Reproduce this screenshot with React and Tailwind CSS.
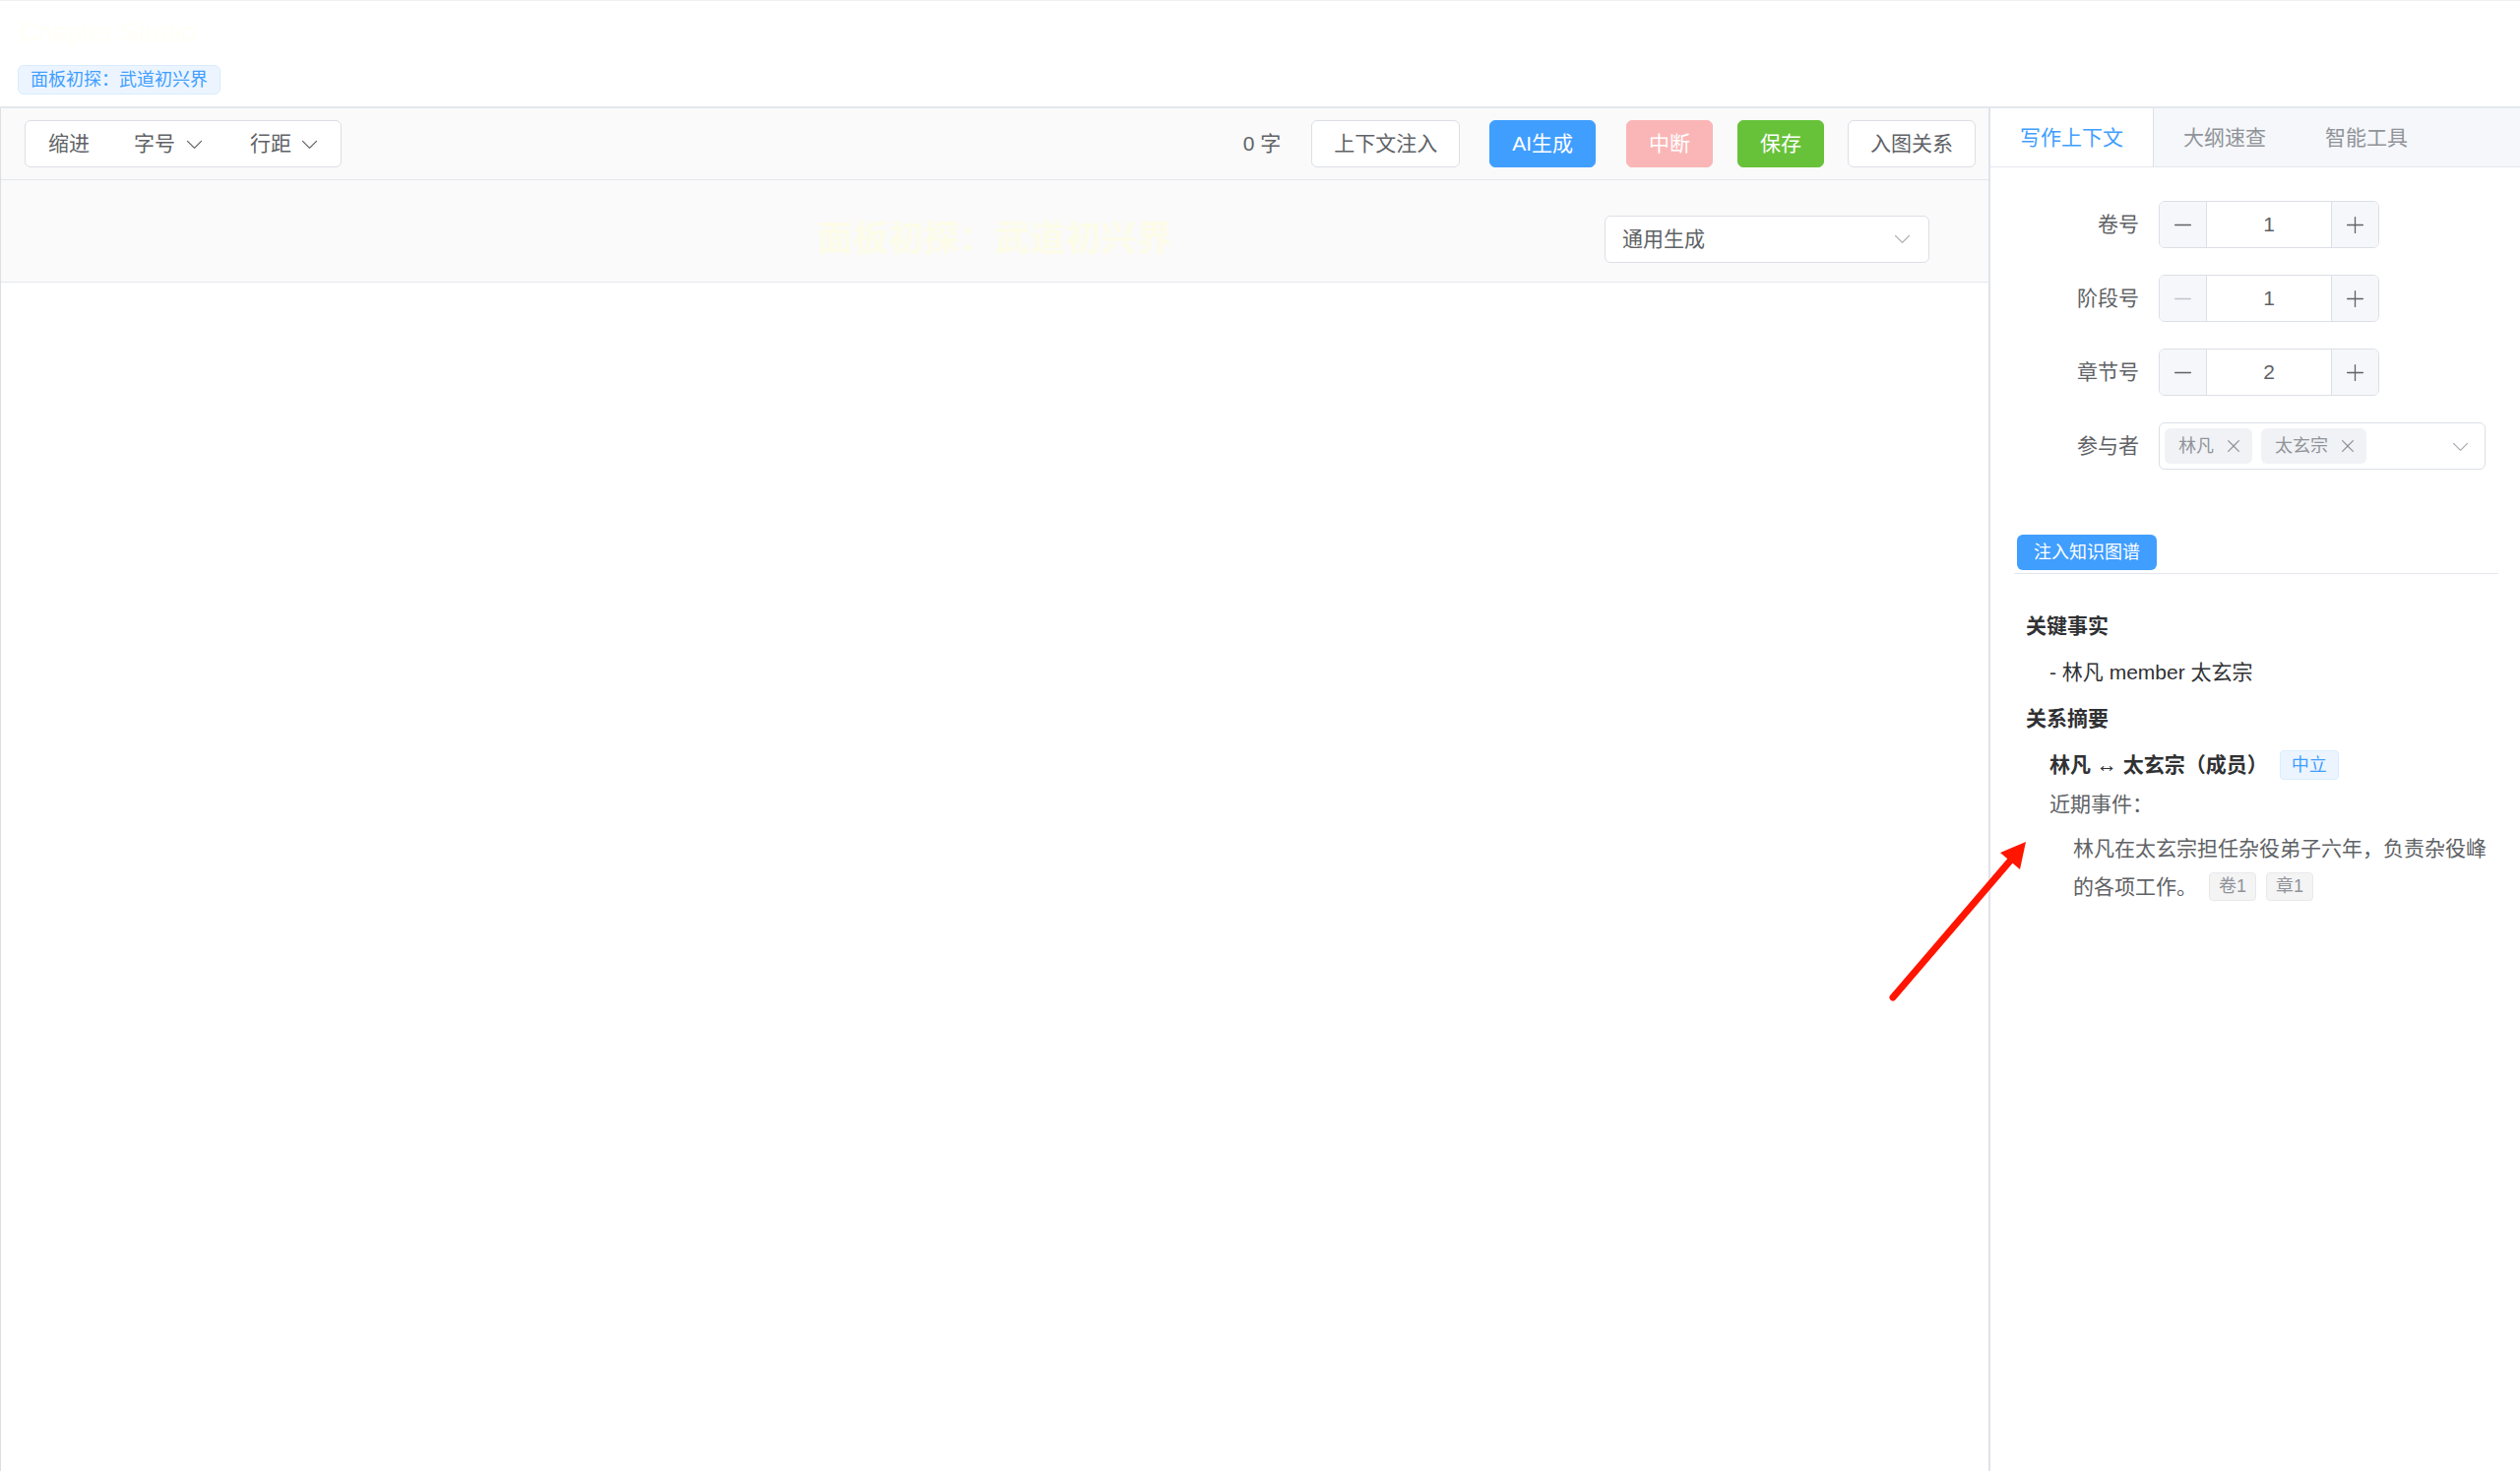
import React from "react";

const FONT = "font-['Liberation_Sans','Noto_Sans_CJK_SC',sans-serif]";

const ArrowDown = ({ className }) => (
  <svg viewBox="0 0 1024 1024" className={className} fill="currentColor">
    <path d="M831.872 340.864 512 652.672 192.128 340.864a30.592 30.592 0 0 0-42.752 0 29.12 29.12 0 0 0 0 41.6L489.664 714.24a32 32 0 0 0 44.672 0l340.288-331.712a29.12 29.12 0 0 0 0-41.728 30.592 30.592 0 0 0-42.752 0z" />
  </svg>
);

const Minus = ({ className }) => (
  <svg viewBox="0 0 1024 1024" className={className} fill="currentColor">
    <path d="M128 544h768a32 32 0 1 0 0-64H128a32 32 0 0 0 0 64z" />
  </svg>
);

const Plus = ({ className }) => (
  <svg viewBox="0 0 1024 1024" className={className} fill="currentColor">
    <path d="M480 480V128a32 32 0 0 1 64 0v352h352a32 32 0 1 1 0 64H544v352a32 32 0 1 1-64 0V544H128a32 32 0 0 1 0-64h352z" />
  </svg>
);

const Close = ({ className }) => (
  <svg viewBox="0 0 1024 1024" className={className} fill="currentColor">
    <path d="M764.288 214.592 512 466.88 259.712 214.592a31.936 31.936 0 0 0-45.12 45.12L466.752 512 214.528 764.224a31.936 31.936 0 1 0 45.12 45.184L512 557.184l252.288 252.288a31.936 31.936 0 0 0 45.12-45.12L557.12 512.064l252.288-252.352a31.936 31.936 0 1 0-45.12-45.184z" />
  </svg>
);

const NumberInput = ({ value, minDisabled }) => (
  <div className="flex h-[48px] w-[224px] overflow-hidden rounded-[6px] border border-[#dcdfe6] bg-white">
    <div
      className={`flex w-[48px] items-center justify-center border-r border-[#dcdfe6] bg-[#f5f7fa] ${
        minDisabled ? "text-[#c0c4cc]" : "text-[#606266]"
      }`}
    >
      <Minus className="h-[21px] w-[21px]" />
    </div>
    <div className="flex flex-1 items-center justify-center text-[21px] text-[#606266]">
      {value}
    </div>
    <div className="flex w-[48px] items-center justify-center border-l border-[#dcdfe6] bg-[#f5f7fa] text-[#606266]">
      <Plus className="h-[21px] w-[21px]" />
    </div>
  </div>
);

const PersonTag = ({ name }) => (
  <span className="flex h-[36px] items-center rounded-[6px] bg-[#f0f2f5] pl-[14px] pr-[9px] text-[18px] text-[#909399]">
    {name}
    <Close className="ml-[10px] h-[20px] w-[20px]" />
  </span>
);

const fields = [
  { label: "卷号", value: 1 },
  { label: "阶段号", value: 1, minDisabled: true },
  { label: "章节号", value: 2 },
];

export default function App() {
  return (
    <div className={`relative h-[1494px] w-full overflow-hidden bg-white ${FONT}`}>
      {/* page header */}
      <div className="h-[108px] border-t border-[#eef0f4] pl-[18px]">
        <div className="mt-[16px] pl-[1px] text-[27px] leading-[32px] text-[#fffff7]">
          Chapter Studio
        </div>
        <span className="mt-[17px] flex h-[30px] w-fit items-center rounded-[6px] border border-[#d9ecff] bg-[#ecf5ff] px-[12px] text-[18px] text-[#409eff]">
          面板初探：武道初兴界
        </span>
      </div>

      <div className="flex h-[1386px] border-t-2 border-[#e4e7ed]">
        {/* editor */}
        <div className="flex w-[2020px] flex-col border-l border-[#dcdfe6]">
          <div className="flex h-[73px] items-center justify-between border-b border-[#e4e7ed] bg-[#fafafa] pl-[24px] pr-[13px]">
            <div className="flex h-[48px] rounded-[6px] border border-[#dcdfe6] bg-white text-[21px] text-[#606266]">
              <div className="flex items-center pl-[23px] pr-[21px]">缩进</div>
              <div className="flex items-center pl-[24px] pr-[22px]">
                字号
                <ArrowDown className="ml-[9px] h-[21px] w-[21px]" />
              </div>
              <div className="flex items-center pl-[24px] pr-[21px]">
                行距
                <ArrowDown className="ml-[8px] h-[21px] w-[21px]" />
              </div>
            </div>
            <div className="flex items-center text-[21px]">
              <span className="text-[#606266]">0 字</span>
              <button className="ml-[31px] h-[48px] rounded-[6px] border border-[#dcdfe6] bg-white px-[22px] text-[#606266]">
                上下文注入
              </button>
              <button className="ml-[30px] h-[48px] rounded-[6px] border border-[#409eff] bg-[#409eff] px-[22px] text-white">
                AI生成
              </button>
              <button className="ml-[31px] h-[48px] rounded-[6px] border border-[#fab6b6] bg-[#fab6b6] px-[22px] text-white">
                中断
              </button>
              <button className="ml-[25px] h-[48px] rounded-[6px] border border-[#67c23a] bg-[#67c23a] px-[22px] text-white">
                保存
              </button>
              <button className="ml-[24px] h-[48px] rounded-[6px] border border-[#dcdfe6] bg-white px-[22px] text-[#606266]">
                入图关系
              </button>
            </div>
          </div>

          <div className="grid h-[104px] grid-cols-[1fr_auto_1fr] items-center border-b border-[#e4e7ed] bg-[#fafafa] px-[60px] pt-[16px]">
            <div />
            <div className="text-[36px] font-bold leading-[44px] text-[#fdfce9]">
              面板初探：武道初兴界
            </div>
            <div className="flex h-[48px] w-[330px] items-center justify-between justify-self-end rounded-[6px] border border-[#dcdfe6] bg-white pl-[17px] pr-[16px] text-[21px] text-[#606266]">
              通用生成
              <ArrowDown className="h-[21px] w-[21px] text-[#a8abb2]" />
            </div>
          </div>

          <div className="flex-1 bg-white" />
        </div>

        <div className="w-[2px] bg-[#dfe3ea]" />

        {/* side panel */}
        <div className="flex-1 bg-white">
          <div className="flex h-[60px] border-b border-[#e4e7ed] bg-[#f5f7fa] text-[21px]">
            <div className="flex items-center border-r border-[#dcdfe6] bg-white px-[30px] text-[#409eff]">
              写作上下文
            </div>
            <div className="flex items-center px-[30px] text-[#909399]">大纲速查</div>
            <div className="flex items-center px-[30px] text-[#909399]">智能工具</div>
          </div>

          <div className="pl-[24px] pr-[22px] pt-[34px]">
            <div className="flex flex-col gap-[27px]">
              {fields.map((f) => (
                <div key={f.label} className="flex h-[48px] items-center">
                  <label className="w-[147px] pr-[20px] text-right text-[21px] text-[#606266]">
                    {f.label}
                  </label>
                  <NumberInput value={f.value} minDisabled={f.minDisabled} />
                </div>
              ))}
              <div className="flex h-[48px] items-center">
                <label className="w-[147px] pr-[20px] text-right text-[21px] text-[#606266]">
                  参与者
                </label>
                <div className="flex h-[48px] w-[332px] items-center justify-between rounded-[6px] border border-[#dcdfe6] bg-white pl-[5px] pr-[14px]">
                  <div className="flex gap-[9px]">
                    <PersonTag name="林凡" />
                    <PersonTag name="太玄宗" />
                  </div>
                  <ArrowDown className="h-[21px] w-[21px] text-[#a8abb2]" />
                </div>
              </div>
            </div>

            <div className="mt-[66px] border-b border-[#e4e7ed] pb-[3px]">
              <button className="ml-[3px] h-[36px] rounded-[6px] bg-[#409eff] px-[17px] text-[18px] text-white">
                注入知识图谱
              </button>
            </div>

            <div className="pl-[12px] text-[21px]">
              <div className="mt-[38px] font-bold leading-[30px] text-[#303133]">关键事实</div>
              <div className="mt-[17px] pl-[24px] leading-[30px] text-[#303133]">
                - 林凡 member 太玄宗
              </div>
              <div className="mt-[17px] font-bold leading-[30px] text-[#303133]">关系摘要</div>
              <div className="mt-[17px] flex h-[30px] items-center pl-[24px]">
                <span className="font-bold text-[#303133]">林凡 ↔ 太玄宗（成员）</span>
                <span className="ml-[12px] flex h-[30px] items-center rounded-[4px] border border-[#d9ecff] bg-[#ecf5ff] px-[11px] text-[18px] text-[#409eff]">
                  中立
                </span>
              </div>
              <div className="mt-[10px] pl-[24px] leading-[30px] text-[#606266]">近期事件：</div>
              <div className="mt-[10px] pl-[48px] text-[#606266]">
                <div className="leading-[39px]">林凡在太玄宗担任杂役弟子六年，负责杂役峰</div>
                <div className="flex h-[39px] items-center">
                  <span>的各项工作。</span>
                  <span className="ml-[12px] flex h-[29px] items-center rounded-[4px] border border-[#e9e9eb] bg-[#f4f4f5] px-[9px] text-[18px] text-[#909399]">
                    卷1
                  </span>
                  <span className="ml-[10px] flex h-[29px] items-center rounded-[4px] border border-[#e9e9eb] bg-[#f4f4f5] px-[9px] text-[18px] text-[#909399]">
                    章1
                  </span>
                </div>
              </div>
            </div>
          </div>
        </div>
      </div>

      {/* annotation arrow */}
      <svg className="pointer-events-none absolute left-0 top-0" width="2560" height="1494">
        <line
          x1="1923"
          y1="1013"
          x2="2044"
          y2="872"
          stroke="#ff1500"
          strokeWidth="7"
          strokeLinecap="round"
        />
        <polygon points="2058,855 2032,866 2052,883" fill="#ff1500" />
      </svg>
    </div>
  );
}
